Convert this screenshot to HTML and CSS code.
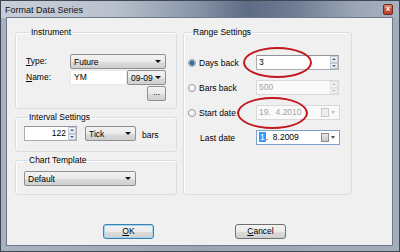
FILE: index.html
```html
<!DOCTYPE html>
<html lang="en">
<head>
    <meta charset="UTF-8">
    <meta name="viewport" content="width=device-width, initial-scale=1.0">
    <title>Format Data Series</title>
    <link rel="stylesheet" href="styles.css">
</head>
<body>
    <div class="window">
        <div class="titlebar">
            <span class="title">Format Data Series</span>
            <span class="close">x</span>
        </div>
        <div class="client">
            <div class="panels">
                <div class="left-col">
                    <fieldset class="group instrument">
                        <legend>Instrument</legend>
                        <div class="form-grid">
                            <label><u>T</u>ype:</label>
                            <div class="combo"><span>Future</span></div>
                            <label><u>N</u>ame:</label>
                            <div class="name-row">
                                <div class="textbox">YM</div>
                                <div class="combo"><span>09-09</span></div>
                            </div>
                            <div class="browse">...</div>
                        </div>
                    </fieldset>

                    <fieldset class="group interval">
                        <legend>Interval Settings</legend>
                        <div class="interval-row">
                            <div class="spin right"><span class="value">122</span><span class="spin-btns"><i></i><i></i></span></div>
                            <div class="combo tick"><span>Tick</span></div>
                            <span class="bars">bars</span>
                        </div>
                    </fieldset>

                    <fieldset class="group template">
                        <legend>Chart Template</legend>
                        <div class="combo template-combo"><span>Default</span></div>
                    </fieldset>
                </div>

                <fieldset class="group range">
                    <legend>Range Settings</legend>
                    <div class="range-grid">
                        <label class="radio checked"><span class="dot"></span>Days back</label>
                        <div class="spin"><span class="value">3</span><span class="spin-btns"><i></i><i></i></span></div>

                        <label class="radio"><span class="dot"></span>Bars back</label>
                        <div class="spin disabled"><span class="value">500</span><span class="spin-btns"><i></i><i></i></span></div>

                        <label class="radio"><span class="dot"></span>Start date</label>
                        <div class="datebox disabled"><span class="value">19.  4.2010</span><span class="cal"></span><span class="drop"></span></div>

                        <label class="plain">Last date</label>
                        <div class="datebox focused"><span class="value"><span class="sel">1</span>.  8.2009</span><span class="cal"></span><span class="drop"></span></div>
                    </div>
                </fieldset>
            </div>

            <div class="buttons">
                <div class="btn default"><u>O</u>K</div>
                <div class="btn"><u>C</u>ancel</div>
            </div>
        </div>

        <!-- red annotation marks drawn over the dialog -->
        <div class="mark mark-days"></div>
        <div class="mark mark-start"></div>
    </div>
</body>
</html>
```

FILE: styles.css
```css
body {
    margin: 0;
    font-family: "Liberation Sans", Arial, sans-serif;
    font-size: 8.5px;
    color: #000;
    background: #fff;
}

.window {
    position: relative;
    width: 400px;
    height: 252px;
    box-sizing: border-box;
    border: 1px solid #3f4654;
    background: linear-gradient(90deg, #a9b2bf, #9aa4b3 50%, #a3acb9);
    display: flex;
    flex-direction: column;
    padding: 0 7px 6px 6px;
}

.titlebar {
    height: 17px;
    margin: 0 -7px 0 -6px;
    padding: 3px 6px 0 4px;
    box-sizing: border-box;
    display: flex;
    align-items: flex-start;
    background: linear-gradient(90deg, #c8cfd9 0%, #b9c1cd 28%, #8a97ab 48%, #5d6b84 62%, #6f7c93 74%, #98a3b4 88%, #a9b2bf 100%);
}

.title {
    font-size: 9px;
    line-height: 12px;
    color: #111;
}

.close {
    margin-left: auto;
    width: 10px;
    height: 11px;
    box-sizing: border-box;
    border: 1px solid #6b2d22;
    border-radius: 2px;
    background: linear-gradient(#e0907a, #c54c30 55%, #b8402a);
    color: #fff;
    font-size: 8px;
    font-weight: bold;
    line-height: 8px;
    text-align: center;
}

.client {
    flex: 1;
    background: #f0f0f0;
    box-shadow: 0 0 0 1px #6f7989;
    padding: 8px 0 0 8px;
}

.panels {
    display: flex;
    gap: 6px;
}

.left-col {
    width: 162px;
    display: flex;
    flex-direction: column;
    gap: 2px;
}

.group {
    margin: 0;
    padding: 0;
    min-width: 0;
    border: 1px solid #d5dfe5;
    border-radius: 3px;
    box-shadow: inset 1px 1px 0 #fff;
}

.group legend {
    margin-left: 4px;
    padding: 0 1px;
    line-height: 12px;
}

.instrument {
    padding: 16px 0 7px 10px;
}

.form-grid {
    display: grid;
    grid-template-columns: 44px 96px;
    grid-auto-rows: 15px;
    row-gap: 1px;
    align-items: center;
}

.form-grid label {
    line-height: 15px;
}

.name-row {
    display: flex;
    height: 15px;
}

.textbox {
    width: 57px;
    box-sizing: border-box;
    background: #fff;
    border: 1px solid #e6e8ec;
    padding-left: 3px;
    line-height: 13px;
}

.name-row .combo {
    flex: 1;
}

.browse {
    grid-column: 2;
    justify-self: end;
    width: 19px;
    height: 15px;
    box-sizing: border-box;
    border: 1px solid #8e8f8f;
    border-radius: 2px;
    background: linear-gradient(#f2f2f2, #ebebeb 50%, #dddddd 51%, #cfcfcf);
    text-align: center;
    line-height: 11px;
}

.combo {
    height: 15px;
    box-sizing: border-box;
    display: flex;
    align-items: center;
    justify-content: space-between;
    padding: 0 4px 0 3px;
    border: 1px solid #8e8f8f;
    border-radius: 2px;
    background: linear-gradient(#f2f2f2, #ebebeb 50%, #dddddd 51%, #cfcfcf);
    white-space: nowrap;
}

.combo::after {
    content: "";
    border-left: 3px solid transparent;
    border-right: 3px solid transparent;
    border-top: 3px solid #111;
}

.interval {
    padding: 3px 0 10px 8px;
}

.interval-row {
    display: flex;
    align-items: center;
}

.interval .spin {
    width: 53px;
}

.tick {
    width: 51px;
    margin-left: 8px;
}

.bars {
    margin: 3px 0 0 6px;
}

.template {
    padding: 5px 0 8px 8px;
    flex: 1;
}

.template-combo {
    width: 112px;
}

.spin {
    height: 15px;
    box-sizing: border-box;
    display: flex;
    background: #fff;
    border: 1px solid #abadb3;
    border-top-color: #8f939b;
}

.spin .value {
    flex: 1;
    padding-left: 2px;
    line-height: 13px;
}

.spin.right .value {
    text-align: right;
    padding-right: 2px;
}

.spin-btns {
    width: 8px;
    display: flex;
    flex-direction: column;
}

.spin-btns i {
    flex: 1;
    display: flex;
    align-items: center;
    justify-content: center;
    border: 1px solid #c3cad5;
    background: linear-gradient(#f6f8fa, #e2e6ec);
}

.spin-btns i:first-child::before {
    content: "";
    border-left: 2px solid transparent;
    border-right: 2px solid transparent;
    border-bottom: 2px solid #4d6185;
}

.spin-btns i:last-child::before {
    content: "";
    border-left: 2px solid transparent;
    border-right: 2px solid transparent;
    border-top: 2px solid #4d6185;
}

.range {
    width: 169px;
    box-sizing: border-box;
    padding: 17px 0 0 4px;
}

.range-grid {
    display: grid;
    grid-template-columns: 68px 84px;
    grid-auto-rows: 15px;
    row-gap: 10px;
    align-items: center;
}

.range-grid .spin {
    width: 83px;
}

.radio {
    display: flex;
    align-items: center;
    gap: 3px;
}

.dot {
    width: 8px;
    height: 8px;
    box-sizing: border-box;
    border-radius: 50%;
    border: 1px solid #9a9c9e;
    background: radial-gradient(circle at 40% 35%, #fff, #e3e5e8);
}

.checked .dot {
    background: radial-gradient(circle, #3f7fae 0, #2a5f8c 2px, #c9dbe8 3px, #f4f6f8);
}

.plain {
    padding-left: 12px;
}

.spin.disabled {
    background: #fafafa;
    border-color: #d9d9d9;
    color: #a3a3a3;
}

.spin.disabled .spin-btns i {
    border-color: #e0e0e0;
    background: #f2f2f2;
}

.spin.disabled .spin-btns i::before {
    border-top-color: #bfbfbf;
    border-bottom-color: #bfbfbf;
}

.datebox {
    height: 15px;
    box-sizing: border-box;
    display: flex;
    align-items: center;
    background: #fff;
    border: 1px solid #abadb3;
    padding: 0 4px 0 2px;
}

.datebox .value {
    flex: 1;
    white-space: pre;
    line-height: 13px;
}

.datebox.disabled {
    background: #fafafa;
    border-color: #d9d9d9;
    color: #a3a3a3;
}

.datebox.focused {
    border-color: #7da2ce;
}

.sel {
    background: #3399ff;
    color: #fff;
    padding: 0 1px;
}

.cal {
    width: 6px;
    height: 7px;
    border: 1px solid #8c8c8c;
    background: linear-gradient(#e8e8e8, #c8c8c8);
    margin-right: 2px;
}

.drop {
    border-left: 2.5px solid transparent;
    border-right: 2.5px solid transparent;
    border-top: 3px solid #555;
}

.datebox.disabled .cal {
    border-color: #c8c8c8;
    background: #efefef;
}

.datebox.disabled .drop {
    border-top-color: #c0c0c0;
}

.buttons {
    display: flex;
    gap: 81px;
    margin-top: 29px;
    padding-left: 88px;
}

.btn {
    width: 51px;
    height: 15px;
    box-sizing: border-box;
    border: 1px solid #707070;
    border-radius: 3px;
    background: linear-gradient(#f2f2f2, #ebebeb 50%, #dddddd 51%, #cfcfcf);
    text-align: center;
    line-height: 13px;
}

.btn.default {
    border-color: #3c7fb1;
    box-shadow: inset 0 0 0 1px #9fd6f0;
}

.mark {
    position: absolute;
    box-sizing: border-box;
    border: 2px solid #c1171d;
    border-radius: 50%;
}

.mark-days {
    left: 242px;
    top: 46px;
    width: 69px;
    height: 31px;
}

.mark-start {
    left: 236px;
    top: 96px;
    width: 71px;
    height: 32px;
}
```
